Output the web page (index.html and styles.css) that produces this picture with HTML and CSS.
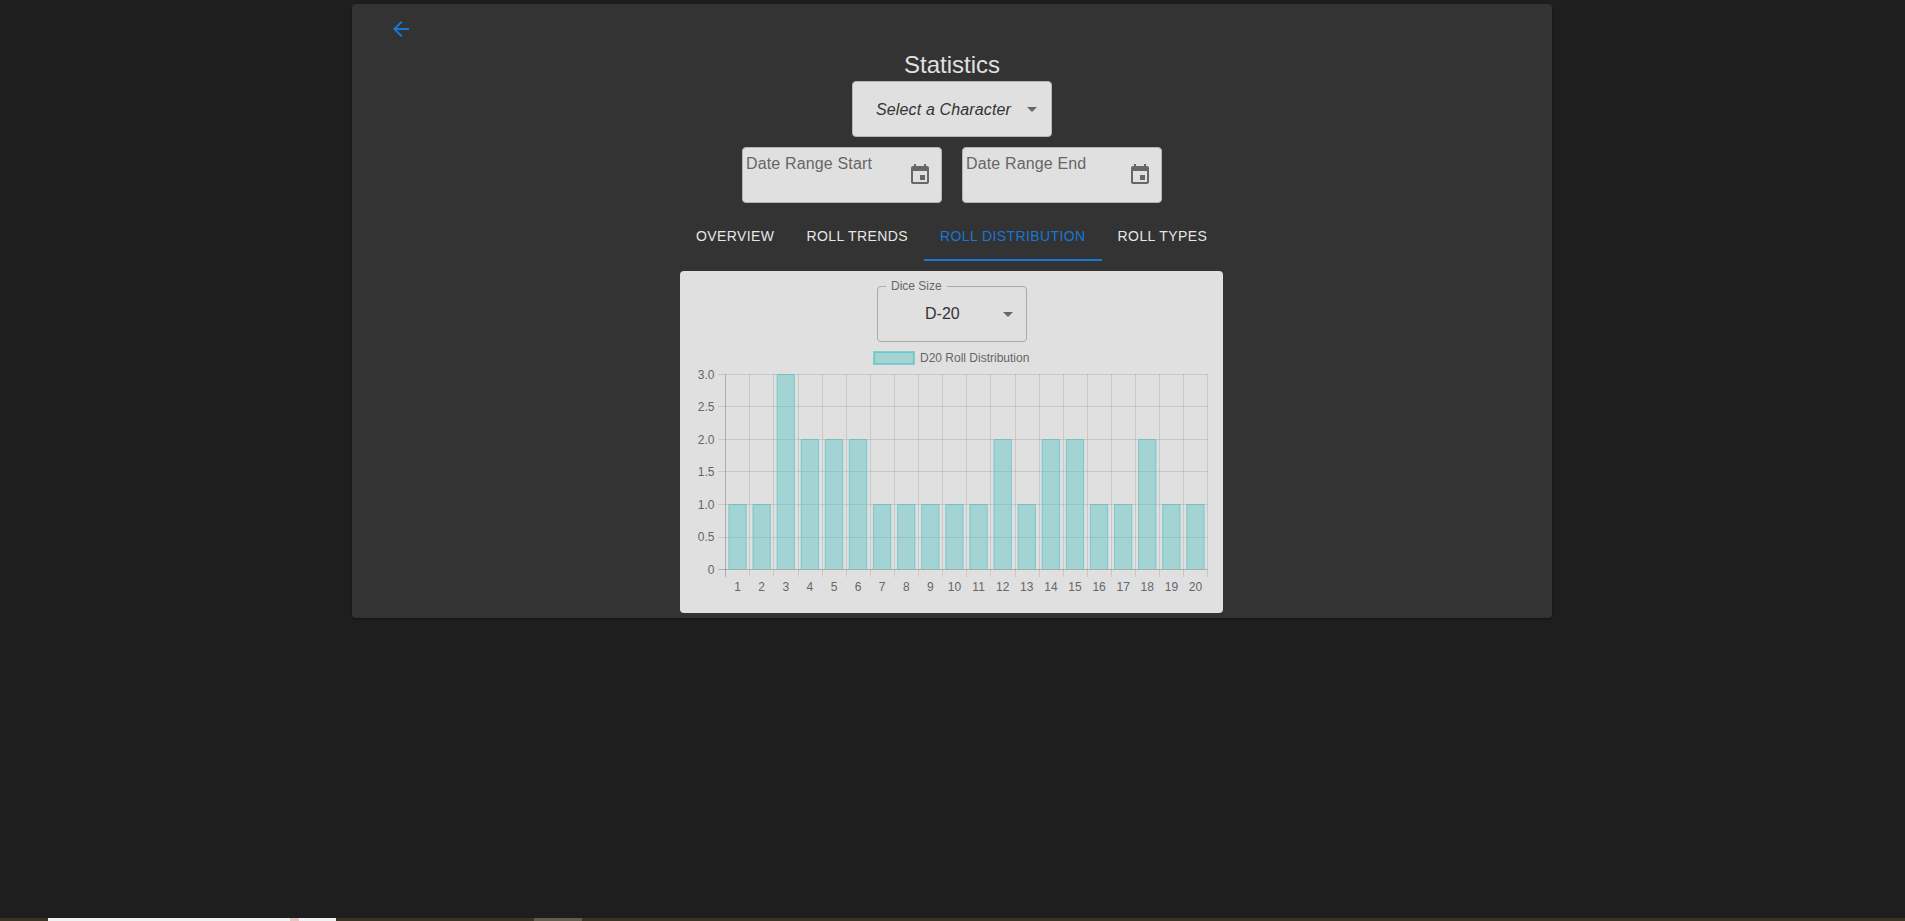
FILE: index.html
```html
<!DOCTYPE html>
<html lang="en">
<head>
<meta charset="utf-8">
<title>Statistics</title>
<link rel="stylesheet" href="styles.css">
</head>
<body>
<main class="main">
  <section class="panel">
    <div class="back-row">
      <button class="back-btn" type="button" aria-label="Back">
        <svg class="icon" viewBox="0 0 24 24"><path d="M20 11H7.83l5.59-5.59L12 4l-8 8 8 8 1.41-1.41L7.83 13H20v-2z"/></svg>
      </button>
    </div>
    <h1 class="title">Statistics</h1>
    <div class="field select-field">
      <span class="select-text">Select a Character</span>
      <svg class="icon caret" viewBox="0 0 24 24"><path d="M7 10l5 5 5-5z"/></svg>
    </div>
    <div class="date-row">
      <div class="field date-field">
        <span class="date-label">Date Range Start</span>
        <svg class="icon calendar" viewBox="0 0 24 24"><path d="M17 12h-5v5h5v-5zM16 1v2H8V1H6v2H5c-1.11 0-1.99.9-1.99 2L3 19c0 1.1.89 2 2 2h14c1.1 0 2-.9 2-2V5c0-1.1-.9-2-2-2h-1V1h-2zm3 18H5V8h14v11z"/></svg>
      </div>
      <div class="field date-field">
        <span class="date-label">Date Range End</span>
        <svg class="icon calendar" viewBox="0 0 24 24"><path d="M17 12h-5v5h5v-5zM16 1v2H8V1H6v2H5c-1.11 0-1.99.9-1.99 2L3 19c0 1.1.89 2 2 2h14c1.1 0 2-.9 2-2V5c0-1.1-.9-2-2-2h-1V1h-2zm3 18H5V8h14v11z"/></svg>
      </div>
    </div>
    <nav class="tabs">
      <a class="tab">Overview</a>
      <a class="tab">Roll Trends</a>
      <a class="tab tab-active">Roll Distribution</a>
      <a class="tab">Roll Types</a>
    </nav>
    <div class="card">
      <fieldset class="dice">
        <legend class="dice-legend">Dice Size</legend>
        <span class="dice-value">D-20</span>
        <svg class="icon dice-caret" viewBox="0 0 24 24"><path d="M7 10l5 5 5-5z"/></svg>
      </fieldset>
      <svg class="chart" viewBox="680 342 543 271" width="543" height="271">
        <g class="legend">
          <rect class="legend-box" x="874" y="352" width="40" height="12"/>
          <text class="label" x="920" y="361.5">D20 Roll Distribution</text>
        </g>
        <path class="grid" d="M718 374.5H1207.5M718 406.5H1207.5M718 439.5H1207.5M718 471.5H1207.5M718 504.5H1207.5M718 537.5H1207.5"/>
        <path class="grid" d="M749.5 374V577M773.5 374V577M798.5 374V577M822.5 374V577M846.5 374V577M870.5 374V577M894.5 374V577M918.5 374V577M942.5 374V577M966.5 374V577M990.5 374V577M1015.5 374V577M1039.5 374V577M1063.5 374V577M1087.5 374V577M1111.5 374V577M1135.5 374V577M1159.5 374V577M1183.5 374V577M1207.5 374V577"/>
        <path class="zero" d="M718 569.5H1207.5M725.5 374V577"/>
        <g class="bars">
          <path d="M728.87 569.5V504.5H746.23V569.5"/>
          <path d="M752.97 569.5V504.5H770.33V569.5"/>
          <path d="M777.07 569.5V374.5H794.43V569.5"/>
          <path d="M801.17 569.5V439.5H818.53V569.5"/>
          <path d="M825.27 569.5V439.5H842.63V569.5"/>
          <path d="M849.37 569.5V439.5H866.73V569.5"/>
          <path d="M873.47 569.5V504.5H890.83V569.5"/>
          <path d="M897.57 569.5V504.5H914.93V569.5"/>
          <path d="M921.67 569.5V504.5H939.03V569.5"/>
          <path d="M945.77 569.5V504.5H963.13V569.5"/>
          <path d="M969.87 569.5V504.5H987.23V569.5"/>
          <path d="M993.97 569.5V439.5H1011.33V569.5"/>
          <path d="M1018.07 569.5V504.5H1035.43V569.5"/>
          <path d="M1042.17 569.5V439.5H1059.53V569.5"/>
          <path d="M1066.27 569.5V439.5H1083.63V569.5"/>
          <path d="M1090.37 569.5V504.5H1107.73V569.5"/>
          <path d="M1114.47 569.5V504.5H1131.83V569.5"/>
          <path d="M1138.57 569.5V439.5H1155.93V569.5"/>
          <path d="M1162.67 569.5V504.5H1180.03V569.5"/>
          <path d="M1186.77 569.5V504.5H1204.13V569.5"/>
        </g>
        <g class="label y-labels">
          <text x="714.5" y="378.5">3.0</text>
          <text x="714.5" y="411">2.5</text>
          <text x="714.5" y="443.5">2.0</text>
          <text x="714.5" y="476">1.5</text>
          <text x="714.5" y="508.5">1.0</text>
          <text x="714.5" y="541">0.5</text>
          <text x="714.5" y="573.5">0</text>
        </g>
        <g class="label x-labels">
          <text x="737.5" y="591">1</text>
          <text x="761.6" y="591">2</text>
          <text x="785.8" y="591">3</text>
          <text x="809.9" y="591">4</text>
          <text x="834" y="591">5</text>
          <text x="858.1" y="591">6</text>
          <text x="882.2" y="591">7</text>
          <text x="906.3" y="591">8</text>
          <text x="930.4" y="591">9</text>
          <text x="954.5" y="591">10</text>
          <text x="978.6" y="591">11</text>
          <text x="1002.7" y="591">12</text>
          <text x="1026.8" y="591">13</text>
          <text x="1050.9" y="591">14</text>
          <text x="1075" y="591">15</text>
          <text x="1099.1" y="591">16</text>
          <text x="1123.2" y="591">17</text>
          <text x="1147.3" y="591">18</text>
          <text x="1171.4" y="591">19</text>
          <text x="1195.5" y="591">20</text>
        </g>
      </svg>
    </div>
  </section>
</main>
<footer class="strip">
  <div class="strip-white"><span class="strip-mark"></span></div>
  <div class="strip-grey"></div>
</footer>
</body>
</html>
```

FILE: styles.css
```css
* {
  box-sizing: border-box;
}

html,
body {
  height: 100%;
}

body {
  margin: 0;
  display: flex;
  flex-direction: column;
  overflow: hidden;
  background: #1e1e1e;
  font-family: "Liberation Sans", Arial, sans-serif;
}

.main {
  flex: 1;
  min-height: 0;
  padding: 4px 1px 0 0;
  display: flex;
  justify-content: center;
  align-items: flex-start;
}

.panel {
  width: 1200px;
  height: 614px;
  padding: 5px 0 5px;
  background: #333333;
  border-radius: 4px;
  box-shadow: 0 1px 3px rgba(0, 0, 0, 0.4);
  display: flex;
  flex-direction: column;
  align-items: center;
}

.icon {
  display: block;
  width: 24px;
  height: 24px;
  fill: rgba(0, 0, 0, 0.54);
}

.back-row {
  align-self: stretch;
  height: 40px;
  padding-left: 29px;
}

.back-btn {
  width: 40px;
  height: 40px;
  padding: 8px;
  border: 0;
  background: transparent;
}

.back-btn .icon {
  fill: #1976d2;
}

.title {
  margin: 2px 0 2px;
  height: 28px;
  font-size: 24px;
  line-height: 28px;
  font-weight: 400;
  color: #e0e0e0;
}

.field {
  position: relative;
  width: 200px;
  height: 56px;
  background: #e0e0e0;
  border: 1px solid #b5b5b5;
  border-radius: 4px;
}

.select-field {
  display: flex;
  align-items: center;
  padding: 1px 0 0 23px;
}

.select-text {
  font-size: 16px;
  font-style: italic;
  letter-spacing: 0.14px;
  color: #333333;
}

.caret {
  position: absolute;
  right: 7px;
  top: 15px;
}

.date-row {
  display: flex;
  gap: 20px;
  margin-top: 10px;
}

.date-field {
  padding: 7px 0 0 3px;
}

.date-label {
  font-size: 16px;
  line-height: 18px;
  letter-spacing: 0.15px;
  color: #666666;
}

.calendar {
  position: absolute;
  right: 9px;
  top: 15px;
}

.tabs {
  display: flex;
  width: 543px;
  margin: 10px 1px 0 0;
  height: 48px;
}

.tab {
  display: flex;
  align-items: center;
  padding: 0 16px;
  flex: auto;
  justify-content: center;
  border-bottom: 2px solid transparent;
  font-size: 14px;
  letter-spacing: 0.4px;
  text-transform: uppercase;
  color: #e6e6e6;
  white-space: nowrap;
}

.tab-active {
  color: #1976d2;
  border-bottom-color: #1976d2;
}

.card {
  width: 543px;
  height: 342px;
  margin: 10px 1px 0 0;
  padding-top: 8px;
  background: #e0e0e0;
  border-radius: 4px;
  display: flex;
  flex-direction: column;
  align-items: center;
}

.dice {
  position: relative;
  width: 150px;
  height: 63px;
  margin: 0 -1px 0 0;
  padding: 0;
  border: 1px solid #aaaaaa;
  border-radius: 4px;
  display: flex;
  flex: none;
}

.dice-legend {
  margin-left: 8px;
  padding: 0 5px;
  font-size: 12px;
  line-height: 14px;
  color: #666666;
}

.dice-value {
  position: absolute;
  left: 47px;
  top: 12px;
  font-size: 16px;
  line-height: 18px;
  color: #333333;
}

.dice-caret {
  position: absolute;
  right: 6px;
  top: 9px;
}

.chart {
  display: block;
  flex: none;
}

.legend-box {
  fill: rgba(75, 192, 192, 0.4);
  stroke: rgba(75, 192, 192, 0.6);
  stroke-width: 2;
}

.label {
  font-family: "Liberation Sans", Arial, sans-serif;
  font-size: 12px;
  fill: #666666;
}

.y-labels {
  text-anchor: end;
}

.x-labels {
  text-anchor: middle;
}

.grid {
  fill: none;
  stroke: rgba(0, 0, 0, 0.1);
  stroke-width: 1;
}

.zero {
  fill: none;
  stroke: rgba(0, 0, 0, 0.22);
  stroke-width: 1;
}

.bars path {
  fill: rgba(75, 192, 192, 0.4);
  stroke: rgba(75, 192, 192, 0.6);
  stroke-width: 1;
}

.strip {
  flex: none;
  height: 3px;
  background: #3a3222;
  display: flex;
  padding-left: 48px;
}

.strip-white {
  width: 288px;
  background: #f2f2f2;
  padding-left: 242px;
}

.strip-mark {
  display: block;
  width: 9px;
  height: 3px;
  background: #e6c8bc;
}

.strip-grey {
  width: 48px;
  margin-left: 198px;
  background: #625b4e;
}
```
